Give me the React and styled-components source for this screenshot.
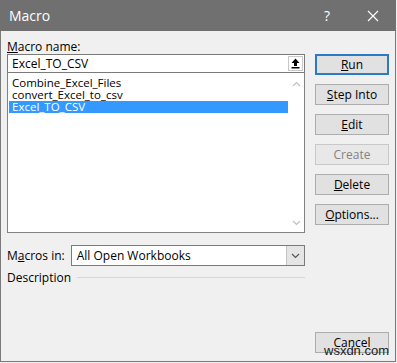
import styled, { createGlobalStyle } from 'styled-components';

const macros = ['Combine_Excel_Files', 'convert_Excel_to_csv', 'Excel_TO_CSV'];

const buttons = [
  { label: 'Run', key: 'R', rest: 'un', primary: true },
  { label: 'Step Into', key: 'S', rest: 'tep Into' },
  { label: 'Edit', key: 'E', rest: 'dit' },
  { label: 'Create', disabled: true },
  { label: 'Delete', key: 'D', rest: 'elete' },
  { label: 'Options...', key: 'O', rest: 'ptions...' },
];

const GlobalStyle = createGlobalStyle`
  html, body {
    margin: 0;
    padding: 0;
    background: #f0f0f0;
  }
  body {
    font-family: "Open Sans", "Noto Sans", sans-serif;
    font-size: 12px;
    color: #000;
  }
`;

const Window = styled.div`
  position: relative;
  width: 396px;
  height: 362px;
  box-sizing: border-box;
  border: 1px solid #7a7a7a;
  border-top: none;
  background: #f0f0f0;
  display: flex;
  flex-direction: column;
`;

const TitleBar = styled.div`
  height: 31px;
  margin: 0 -1px;
  background: #707070;
  color: #fff;
  display: flex;
  align-items: center;
  padding: 0 0 0 9px;
  font-size: 14px;
`;

const Title = styled.span`
  flex: 1;
`;

const TitleBtn = styled.span`
  width: 46px;
  text-align: center;
  font-size: 14px;
  display: flex;
  justify-content: center;
`;

const Body = styled.div`
  flex: 1;
  display: flex;
  gap: 10px;
  padding: 8px 6px 8px 6px;
`;

const LeftCol = styled.div`
  width: 298px;
  display: flex;
  flex-direction: column;
`;

const RightCol = styled.div`
  width: 74px;
  display: flex;
  flex-direction: column;
  gap: 9px;
  padding-top: 15px;
`;

const Label = styled.div`
  height: 15px;
  line-height: 15px;
`;

const U = styled.span`
  text-decoration: underline;
  text-underline-offset: 1px;
`;

const NameInput = styled.div`
  height: 19px;
  box-sizing: border-box;
  border: 1px solid #7a7a7a;
  background: #fff;
  display: flex;
  align-items: center;
  padding-left: 4px;
  justify-content: space-between;
`;

const UpBtn = styled.span`
  width: 15px;
  height: 15px;
  margin-right: 1px;
  border: 1px solid #c8c8c8;
  box-sizing: border-box;
  display: flex;
  align-items: center;
  justify-content: center;
  background: #fff;
`;

const List = styled.div`
  height: 160px;
  box-sizing: border-box;
  border: 1px solid #828282;
  border-top: none;
  background: #fff;
  display: flex;
  padding: 4px 0 0 1px;
`;

const Rows = styled.div`
  flex: 1;
  display: flex;
  flex-direction: column;
`;

const Row = styled.div`
  height: 12px;
  line-height: 12px;
  font-size: 11.5px;
  padding-left: 3px;
  background: ${(p) => (p.selected ? '#3399ff' : 'transparent')};
  color: ${(p) => (p.selected ? '#fff' : '#000')};
`;

const ScrollTrack = styled.div`
  width: 16px;
  display: flex;
  flex-direction: column;
  justify-content: space-between;
  align-items: center;
  padding: 4px 0 6px;
`;

const ComboRow = styled.div`
  margin-top: 12px;
  display: flex;
  align-items: center;
  gap: 6px;
`;

const Combo = styled.div`
  flex: 1;
  height: 21px;
  box-sizing: border-box;
  border: 1px solid #7a7a7a;
  background: #fff;
  display: flex;
  align-items: center;
  padding-left: 5px;
  justify-content: space-between;
`;

const ComboArrow = styled.span`
  width: 17px;
  height: 19px;
  background: #e5e5e5;
  border-left: 1px solid #c4c4c4;
  display: flex;
  align-items: center;
  justify-content: center;
`;

const DescRow = styled.div`
  margin-top: 3px;
  display: flex;
  align-items: center;
  gap: 6px;
`;

const Rule = styled.div`
  flex: 1;
  height: 1px;
  background: #d6d6d6;
`;

const Button = styled.div`
  height: 21px;
  box-sizing: border-box;
  border: ${(p) => (p.primary ? '2px solid #2a7bc4' : '1px solid #adadad')};
  background: #e1e1e1;
  color: ${(p) => (p.disabled ? '#838383' : '#000')};
  display: flex;
  align-items: center;
  justify-content: center;
  ${(p) => p.disabled && 'background: #e8e8e8; border-color: #c8c8c8;'}
`;

const Spacer = styled.div`
  flex: 1;
`;

const Watermark = styled.div`
  position: absolute;
  left: 323px;
  top: 344px;
  font-family: "Liberation Sans", sans-serif;
  font-size: 13px;
  color: #222;
  line-height: 14px;
`;

const Chevron = ({ up, color = '#c0c0c0' }) => (
  <svg width="9" height="6" viewBox="0 0 9 6">
    <path
      d={up ? 'M1 5 L4.5 1.5 L8 5' : 'M1 1 L4.5 4.5 L8 1'}
      fill="none"
      stroke={color}
      strokeWidth="1.2"
    />
  </svg>
);

const App = () => {
  return (
    <>
      <GlobalStyle />
      <Window>
        <TitleBar>
          <Title>Macro</Title>
          <TitleBtn>?</TitleBtn>
          <TitleBtn>
            <svg width="12" height="12" viewBox="0 0 12 12">
              <path d="M1 1 L11 11 M11 1 L1 11" stroke="#fff" strokeWidth="1.2" />
            </svg>
          </TitleBtn>
        </TitleBar>
        <Body>
          <LeftCol>
            <Label>
              <U>M</U>acro name:
            </Label>
            <NameInput>
              <span>Excel_TO_CSV</span>
              <UpBtn>
                <svg width="9" height="11" viewBox="0 0 9 11">
                  <path d="M4.5 0.5 L8.5 5 L6 5 L6 8 L3 8 L3 5 L0.5 5 Z" fill="#000" />
                  <rect x="0.5" y="9" width="8" height="1.5" fill="#000" />
                </svg>
              </UpBtn>
            </NameInput>
            <List>
              <Rows>
                {macros.map((m, i) => (
                  <Row key={i} selected={i === 2}>
                    {m}
                  </Row>
                ))}
              </Rows>
              <ScrollTrack>
                <Chevron up />
                <Chevron />
              </ScrollTrack>
            </List>
            <ComboRow>
              <span>
                M<U>a</U>cros in:
              </span>
              <Combo>
                <span>All Open Workbooks</span>
                <ComboArrow>
                  <Chevron color="#555" />
                </ComboArrow>
              </Combo>
            </ComboRow>
            <DescRow>
              <span>Description</span>
              <Rule />
            </DescRow>
          </LeftCol>
          <RightCol>
            {buttons.map((b, i) => (
              <Button key={i} primary={b.primary} disabled={b.disabled}>
                {b.key ? (
                  <span>
                    <U>{b.key}</U>
                    {b.rest}
                  </span>
                ) : (
                  b.label
                )}
              </Button>
            ))}
            <Spacer />
            <Button>Cancel</Button>
          </RightCol>
        </Body>
        <Watermark>wsxdn.com</Watermark>
      </Window>
    </>
  );
};

export default App;
